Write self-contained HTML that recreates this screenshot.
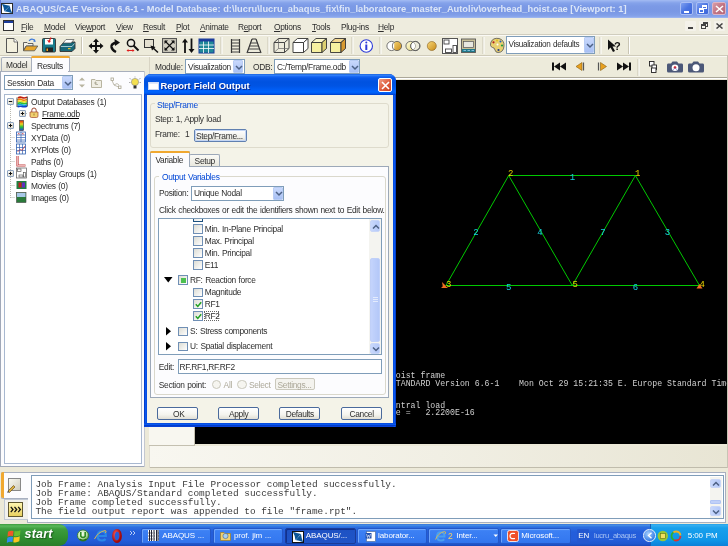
<!DOCTYPE html>
<html><head><meta charset="utf-8">
<style>
*{margin:0;padding:0;box-sizing:border-box}
html,body{width:728px;height:546px;overflow:hidden;will-change:transform;background:#ECE9D8;font-family:"Liberation Sans",sans-serif;font-size:8px;color:#000;position:relative}
.a{position:absolute}
.t{position:absolute;white-space:nowrap;line-height:1;font-size:8.4px;letter-spacing:-0.3px;word-spacing:0.6px;color:#2E2E2E}
u{text-decoration:underline;text-underline-offset:1px}
</style></head><body>
<!-- title bar -->
<div class="a" style="left:0;top:0;width:728px;height:18px;border-left:1px solid #6A7ED8;background:linear-gradient(#A4BCF2 0px,#98B2F0 1px,#84A2EA 3px,#7C9AE6 6px,#7997E4 11px,#809EE8 15px,#8CA8EC 17px,#A8BEF2 18px)"></div>
<svg class="a" style="left:1px;top:3px" width="12" height="11" viewBox="0 0 12 11"><rect x="0.5" y="0.5" width="11" height="10" fill="#fff" stroke="#2A2A2A"/><path d="M0.8 0.8 Q5 2.2 8.8 2.8 Q9 6 11.2 10.2 Q7 8.6 3.4 8.2 Q3.2 4.5 0.8 0.8Z" fill="#0A5598"/><path d="M3.8 8 L8.8 3" stroke="#D8E8F8" stroke-width="0.7" stroke-dasharray="1 0.8"/></svg>
<div class="t" style="left:16px;top:5px;font-size:9.3px;font-weight:bold;color:#DCE6F8;letter-spacing:0px;word-spacing:0">ABAQUS/CAE Version 6.6-1 - Model Database: d:\lucru\lucru_abaqus_fix\fin_laboratoare_master_Autoliv\overhead_hoist.cae [Viewport: 1]</div>
<div class="a" style="left:680px;top:2px;width:13px;height:13px;border-radius:2px;background:linear-gradient(135deg,#7FA0F0,#4A74E2 50%,#3E66D8);border:1px solid #A9BEF5"><div class="a" style="left:3px;top:8px;width:5px;height:2px;background:#fff"></div></div>
<div class="a" style="left:696px;top:2px;width:13px;height:13px;border-radius:2px;background:linear-gradient(135deg,#7FA0F0,#4A74E2 50%,#3E66D8);border:1px solid #A9BEF5"><div class="a" style="left:5px;top:2px;width:5px;height:4px;border:1px solid #fff;border-top-width:2px"></div><div class="a" style="left:2px;top:5px;width:5px;height:5px;border:1px solid #fff;border-top-width:2px;background:#4A74E2"></div></div>
<div class="a" style="left:712px;top:2px;width:14px;height:13px;border-radius:2px;background:linear-gradient(135deg,#D89CA8,#C27584 50%,#B5687A);border:1px solid #DDB4C4"><svg class="a" style="left:2px;top:2px" width="9" height="8"><path d="M1 1L8 7M8 1L1 7" stroke="#fff" stroke-width="1.6"/></svg></div>
<!-- menubar -->
<div class="a" style="left:0;top:18px;width:728px;height:16px;background:#EEECDE"></div>
<svg class="a" style="left:3px;top:20px" width="11" height="11"><rect x="0.5" y="0.5" width="10" height="10" fill="#fff" stroke="#333"/><rect x="1" y="1" width="9" height="2" fill="#1C3C9C"/></svg>
<div class="t" style="left:21px;top:23px"><u>F</u>ile</div>
<div class="t" style="left:44px;top:23px"><u>M</u>odel</div>
<div class="t" style="left:75px;top:23px">Vie<u>w</u>port</div>
<div class="t" style="left:116px;top:23px"><u>V</u>iew</div>
<div class="t" style="left:143px;top:23px"><u>R</u>esult</div>
<div class="t" style="left:176px;top:23px"><u>P</u>lot</div>
<div class="t" style="left:200px;top:23px"><u>A</u>nimate</div>
<div class="t" style="left:238px;top:23px">R<u>e</u>port</div>
<div class="t" style="left:274px;top:23px"><u>O</u>ptions</div>
<div class="t" style="left:312px;top:23px"><u>T</u>ools</div>
<div class="t" style="left:341px;top:23px">Plug-ins</div>
<div class="t" style="left:378px;top:23px"><u>H</u>elp</div>
<!-- mdi buttons -->
<div class="a" style="left:685px;top:21px;width:11px;height:10px;background:#F4F2EA;border-radius:1px"><div class="a" style="left:3px;top:6px;width:5px;height:2px;background:#444"></div></div>
<div class="a" style="left:699px;top:21px;width:12px;height:10px;background:#F4F2EA;border-radius:1px"><div class="a" style="left:4px;top:1px;width:5px;height:5px;border:1px solid #444;border-top-width:2px"></div><div class="a" style="left:2px;top:3px;width:5px;height:5px;border:1px solid #444;border-top-width:2px;background:#F4F2EA"></div></div>
<div class="a" style="left:714px;top:21px;width:11px;height:10px;background:#F4F2EA;border-radius:1px"><svg class="a" style="left:2px;top:2px" width="7" height="6"><path d="M0.5 0.5L6.5 5.5M6.5 0.5L0.5 5.5" stroke="#444" stroke-width="1.5"/></svg></div>
<!-- toolbar -->
<div class="a" style="left:0;top:34px;width:728px;height:1px;background:#D0CDBE"></div>
<div class="a" style="left:0;top:35px;width:728px;height:1px;background:#FBFAF5"></div>
<div class="a" style="left:0;top:36px;width:728px;height:19px;background:#EDEBDB"></div>
<div class="a" style="left:0;top:55px;width:728px;height:1px;background:#CFCBBA"></div>
<div class="a" style="left:0;top:56px;width:728px;height:1px;background:#FBFAF5"></div>
<div class="a" style="left:0;top:57px;width:728px;height:22px;background:#EDEBDB"></div>
<!-- toolbar icons -->
<svg class="a" style="left:0;top:34px" width="728" height="22" viewBox="0 34 728 22">
<defs>
<linearGradient id="gy" x1="0" y1="0" x2="1" y2="1"><stop offset="0" stop-color="#FFFDE0"/><stop offset="1" stop-color="#E8D878"/></linearGradient>
<linearGradient id="go" x1="0" y1="0" x2="1" y2="1"><stop offset="0" stop-color="#F8D878"/><stop offset="1" stop-color="#C88A18"/></linearGradient>
</defs>
<!-- new -->
<path d="M6.5 38.5 H14 L17.5 42 V52.5 H6.5 Z" fill="#F3F0DE" stroke="#555" stroke-width="1"/>
<path d="M14 38.5 V42 H17.5" fill="#fff" stroke="#555" stroke-width="0.8"/>
<!-- open -->
<path d="M23.5 42.5 H27 L28 43.5 H33 V46 H26 L23.5 50.5 Z" fill="#F4F2E8" stroke="#555" stroke-width="0.9"/>
<path d="M23.5 50.8 L26.3 46 H37.8 L34.5 50.8 Z" fill="#E8A62A" stroke="#555" stroke-width="0.8"/>
<path d="M29 41 Q31.5 37.5 35 40.5" fill="none" stroke="#3C78D8" stroke-width="1.1"/>
<path d="M34 39 L36 41.5 L33.5 42" fill="#3C78D8"/>
<!-- save -->
<rect x="42.5" y="38.5" width="13" height="13.5" rx="1" fill="#187A8A" stroke="#333" stroke-width="0.9"/>
<rect x="45" y="39" width="8" height="5.5" fill="#fff"/>
<rect x="45.5" y="47.5" width="7.5" height="4.5" fill="#222"/>
<rect x="46.5" y="48.5" width="1.5" height="2.5" fill="#E8A020"/>
<path d="M51 37.5 L49 41.5" stroke="#E02020" stroke-width="1.2"/><path d="M47 40 L49 43 L51 41" fill="#E02020"/>
<!-- print -->
<path d="M60 46.5 L64 42 H75 V48.5 L72 51.5 H60 Z" fill="#186878" stroke="#333" stroke-width="0.9"/>
<path d="M63 43 L66 39.5 H74 L71 43 Z" fill="#fff" stroke="#555" stroke-width="0.7"/>
<path d="M61 46.5 H72 L74.5 43.5" fill="none" stroke="#C8E0E8" stroke-width="0.8"/>
<rect x="68" y="48" width="2.5" height="1.2" fill="#E8C030"/>
<!-- sep -->
<rect x="81" y="37" width="1" height="17" fill="#C9C5B4"/><rect x="82" y="37" width="1" height="17" fill="#FFFFFF"/>
<!-- move -->
<path d="M96 38.5 L99 42 H97 V45 H100 V43 L103.5 46 L100 49 V47 H97 V50 H99 L96 53.5 L93 50 H95 V47 H92 V49 L88.5 46 L92 43 V45 H95 V42 H93 Z" fill="#111"/>
<!-- rotate -->
<path d="M117 42.5 Q111 43.5 111.5 47 Q112 50 116 52" fill="none" stroke="#111" stroke-width="2.4"/>
<path d="M114.5 39 L120 42.5 L115 46 Z" fill="#111"/>
<!-- zoom -->
<circle cx="131" cy="43" r="3.6" fill="#F0EEE4" stroke="#111" stroke-width="1.5"/>
<path d="M133.5 45.5 L138.5 50.5" stroke="#111" stroke-width="2"/>
<path d="M127 50.5 H134" stroke="#E02020" stroke-width="1"/><path d="M126.5 50.5 L128.5 49 V52Z M134.5 50.5 L132.5 49 V52Z" fill="#E02020"/>
<!-- box zoom -->
<rect x="144.5" y="39.5" width="9" height="8" fill="#E4E0D0" stroke="#333" stroke-width="1"/>
<path d="M151.5 46.5 L158 52.5" stroke="#111" stroke-width="1.5"/><path d="M150.5 45.5 L155.5 47 L152 50.5 Z" fill="#111"/>
<!-- auto-fit pressed -->
<rect x="162.5" y="38.5" width="14" height="14" fill="#B6B3A6" stroke="#555" stroke-width="1"/>
<rect x="163.5" y="39.5" width="12" height="12" fill="#D4D1C4"/>
<path d="M165 41 L174 50 M174 41 L165 50" stroke="#111" stroke-width="1.2"/>
<path d="M164.5 40.5 H168 L164.5 44Z M174.5 40.5 H171 L174.5 44Z M164.5 50.5 H168 L164.5 47Z M174.5 50.5 H171 L174.5 47Z" fill="#111"/>
<!-- up/down -->
<path d="M185 41 V53" stroke="#111" stroke-width="1.8"/><path d="M182 42.5 L185 38.5 L188 42.5Z" fill="#111"/>
<path d="M191.5 38.5 V50" stroke="#111" stroke-width="1.8"/><path d="M188.5 49 L191.5 53 L194.5 49Z" fill="#111"/>
<!-- table -->
<rect x="199" y="39" width="15" height="14" fill="#208898" stroke="#1C3C9C" stroke-width="1"/>
<rect x="199" y="39" width="15" height="2.5" fill="#1C3C9C"/>
<path d="M199 45 H214 M199 48.5 H214 M203.5 41.5 V53 M208.5 41.5 V53" stroke="#fff" stroke-width="0.8"/>
<!-- sep -->
<rect x="220.5" y="37" width="1" height="17" fill="#C9C5B4"/><rect x="221.5" y="37" width="1" height="17" fill="#FFFFFF"/>
<!-- ladder -->
<path d="M231.5 39 V53 M239.5 39 V53" stroke="#333" stroke-width="1.2"/>
<path d="M231.5 40 H239.5 M231.5 43 H239.5 M231.5 46 H239.5 M231.5 49 H239.5 M231.5 52 H239.5" stroke="#444" stroke-width="1"/>
<!-- pyramid -->
<path d="M252 39 L247 53 M256 39 L261 53 M252 39 H256" stroke="#333" stroke-width="1.2" fill="none"/>
<path d="M250.5 43 H257.5 M249.5 46 H258.5 M248.5 49 H259.5 M247.5 52.5 H260.5" stroke="#444" stroke-width="1"/>
<!-- sep -->
<rect x="267.5" y="37" width="1" height="17" fill="#C9C5B4"/><rect x="268.5" y="37" width="1" height="17" fill="#FFFFFF"/>
<!-- wire cube -->
<g fill="none" stroke="#333" stroke-width="0.9"><path d="M274 42.5 H284.5 V52.5 H274 Z M274 42.5 L278.5 38.5 H289 L284.5 42.5 M289 38.5 V48.5 L284.5 52.5"/><path d="M278.5 38.5 V48.5 H289 M278.5 48.5 L274 52.5" stroke="#666" stroke-width="0.7"/></g>
<!-- hidden cube -->
<g fill="#fff" stroke="#333" stroke-width="0.9"><path d="M293 42.5 H303.5 V52.5 H293 Z"/><path d="M293 42.5 L297.5 38.5 H308 L303.5 42.5 Z"/><path d="M303.5 42.5 L308 38.5 V48.5 L303.5 52.5 Z"/></g>
<!-- filled cube -->
<g stroke="#333" stroke-width="0.9"><path d="M311.5 42.5 H322 V52.5 H311.5 Z" fill="#F6F0A0"/><path d="M311.5 42.5 L316 38.5 H326.5 L322 42.5 Z" fill="#FAF6C8"/><path d="M322 42.5 L326.5 38.5 V48.5 L322 52.5 Z" fill="#DCD070"/></g>
<!-- shaded cube -->
<g stroke="#333" stroke-width="0.9"><path d="M330.5 42.5 H341 V52.5 H330.5 Z" fill="#F6F0A0"/><path d="M330.5 42.5 L335 38.5 H345.5 L341 42.5 Z" fill="#F4D890"/><path d="M341 42.5 L345.5 38.5 V48.5 L341 52.5 Z" fill="#D89A30"/></g>
<!-- sep -->
<rect x="351.5" y="37" width="1" height="17" fill="#C9C5B4"/><rect x="352.5" y="37" width="1" height="17" fill="#FFFFFF"/>
<!-- info -->
<circle cx="366.3" cy="46" r="6.2" fill="#fff" stroke="#2E3CD8" stroke-width="1.1"/>
<circle cx="366.3" cy="42.5" r="1" fill="#2E3CD8"/><rect x="365.3" y="44.5" width="2" height="5.5" fill="#2E3CD8"/>
<!-- sep -->
<rect x="379.5" y="37" width="1" height="17" fill="#C9C5B4"/><rect x="380.5" y="37" width="1" height="17" fill="#FFFFFF"/>
<!-- venn1 -->
<circle cx="391.5" cy="46" r="4.6" fill="#fff" stroke="#555" stroke-width="0.8"/>
<circle cx="397" cy="46" r="4.6" fill="url(#go)" stroke="#555" stroke-width="0.8"/>
<path d="M394.2 42.3 A4.6 4.6 0 0 0 394.2 49.7" fill="#fff" stroke="#555" stroke-width="0.6"/>
<!-- venn2 -->
<circle cx="410.5" cy="46" r="4.6" fill="url(#gy)" stroke="#555" stroke-width="0.8"/>
<circle cx="415.3" cy="46" r="4.6" fill="none" stroke="#555" stroke-width="0.8"/>
<path d="M413 42.1 A4.6 4.6 0 0 1 413 49.9 A4.6 4.6 0 0 1 413 42.1" fill="#fff"/>
<circle cx="415.3" cy="46" r="4.6" fill="none" stroke="#555" stroke-width="0.8"/>
<!-- circle -->
<circle cx="431.8" cy="46" r="4.5" fill="url(#go)" stroke="#886020" stroke-width="0.6"/>
<!-- layout -->
<rect x="442.5" y="38.5" width="15" height="15" fill="#fff" stroke="#555" stroke-width="1"/>
<rect x="444" y="40" width="5" height="4" fill="#fff" stroke="#444" stroke-width="0.9"/>
<rect x="445.5" y="49" width="6" height="3.5" fill="#fff" stroke="#444" stroke-width="0.9"/>
<rect x="453" y="45.5" width="3.5" height="7" fill="#fff" stroke="#444" stroke-width="0.9"/>
<!-- monitor -->
<rect x="461.5" y="39" width="14" height="13.5" fill="#C8C098" stroke="#555" stroke-width="0.9"/>
<rect x="463.5" y="41.5" width="10" height="6" fill="#E8E8E0" stroke="#555" stroke-width="0.7"/>
<rect x="462" y="49" width="13" height="3" fill="#207888"/>
<path d="M463.5 50.5 H466 M467.5 50.5 H470 M471.5 50.5 H474" stroke="#9CE" stroke-width="0.8"/>
<!-- sep -->
<rect x="482.5" y="37" width="1" height="17" fill="#C9C5B4"/><rect x="483.5" y="37" width="1" height="17" fill="#FFFFFF"/>
<!-- palette -->
<path d="M491 42 Q493 37.5 499 38.5 Q504.5 40 504 46 Q503.5 52.5 498 52.5 Q495.5 52.5 495 50 Q494.5 47.5 492.5 47.5 Q489.5 46.5 491 42 Z" fill="#E8D070" stroke="#555" stroke-width="0.8"/>
<circle cx="493.5" cy="42.3" r="1.1" fill="#B02020"/><circle cx="497" cy="40.6" r="1" fill="#E0C020"/><circle cx="500.5" cy="41.5" r="1" fill="#2060C0"/><circle cx="502" cy="45.5" r="1.1" fill="#20A040"/><circle cx="498.5" cy="50" r="1.1" fill="#203890"/><circle cx="497.5" cy="44.5" r="1" fill="#fff"/>
<!-- sep -->
<rect x="599.5" y="37" width="1" height="17" fill="#C9C5B4"/><rect x="600.5" y="37" width="1" height="17" fill="#FFFFFF"/>
<!-- arrow ? -->
<path d="M608 39.5 L608 50 L610.5 47.5 L613 52 L615 51 L612.5 46.5 L616 46.5 Z" fill="#111"/>
<text x="614" y="50" font-family="Liberation Sans" font-weight="bold" font-size="11" fill="#111">?</text>
<rect x="628" y="37" width="1" height="17" fill="#C9C5B4"/><rect x="629" y="37" width="1" height="17" fill="#FFFFFF"/>
</svg>
<!-- viz defaults combo -->
<div class="a" style="left:506px;top:36px;width:89px;height:18px;background:#fff;border:1px solid #7F9DB9"></div>
<div class="t" style="left:508.5px;top:41px;font-size:8.2px;letter-spacing:-0.3px">Visualization defaults</div>
<div class="a" style="left:584px;top:37px;width:10px;height:16px;border-radius:1px;background:linear-gradient(#C8D8FC,#A8C0F4);border:1px solid #B8CCF4"><svg class="a" style="left:1px;top:5px" width="8" height="6"><path d="M1 1 L4 4 L7 1" fill="none" stroke="#4D6185" stroke-width="1.5"/></svg></div>
<!-- tabs -->
<div class="a" style="left:1px;top:57px;width:31px;height:15px;background:linear-gradient(#F6F5EF,#E6E3D6);border:1px solid #A8AFBC;border-bottom:none;border-radius:2px 2px 0 0"></div>
<div class="t" style="left:6px;top:61px">Model</div>
<div class="a" style="left:31px;top:56px;width:39px;height:16px;background:#FCFCFE;border:1px solid #A8AFBC;border-bottom:none;border-radius:2px 2px 0 0"></div>
<div class="a" style="left:31px;top:56px;width:39px;height:2px;background:#F0A830;border-radius:2px 2px 0 0"></div>
<div class="t" style="left:37px;top:61.6px">Results</div>
<!-- left panel -->
<div class="a" style="left:0;top:71px;width:145px;height:396px;background:#FCFCFE;border:1px solid #A0A8B8;border-top-color:#A8AFBC"></div>
<div class="a" style="left:32px;top:71px;width:36px;height:1px;background:#FCFCFE"></div>
<div class="a" style="left:144px;top:71px;width:1px;height:396px;background:#C4C8D0"></div>
<!-- session combo -->
<div class="a" style="left:4px;top:75px;width:69px;height:15px;background:#fff;border:1px solid #7F9DB9"></div>
<div class="t" style="left:7px;top:79px">Session Data</div>
<div class="a" style="left:62px;top:76px;width:10px;height:13px;border-radius:1px;background:linear-gradient(#C8D8FC,#A8C0F4);border:1px solid #B8CCF4"><svg class="a" style="left:1px;top:3.5px" width="8" height="6"><path d="M1 1 L4 4 L7 1" fill="none" stroke="#4D6185" stroke-width="1.5"/></svg></div>
<svg class="a" style="left:76px;top:75px" width="68" height="16">
<path d="M3 5.5 L6 2.5 L9 5.5Z M3 9.5 L6 12.5 L9 9.5Z" fill="#B8B4A0"/>
<path d="M15.5 4.5 H19 L20 5.5 H25.5 V12.5 H15.5 Z" fill="#F0EEE4" stroke="#B8B4A0" stroke-width="1"/>
<path d="M18 8 H21 M19.5 6.5 V9.5 H22" stroke="#A8A490" stroke-width="0.8" fill="none"/>
<rect x="35" y="3" width="2.5" height="2.5" fill="none" stroke="#A8A490" stroke-width="0.8"/><rect x="42.5" y="11" width="2.5" height="2.5" fill="none" stroke="#A8A490" stroke-width="0.8"/>
<path d="M36 5.5 L38 10 L42.5 12 M38 10 L41 8.5 L43 10" fill="none" stroke="#A8A490" stroke-width="0.7"/>
<circle cx="59" cy="7" r="3.6" fill="#F4E050" stroke="#888" stroke-width="0.6"/>
<rect x="57.5" y="10.5" width="3" height="3" fill="#333"/>
<path d="M53.5 3 L55 4.5 M64.5 3 L63 4.5 M53 7.5 H54.5 M65 7.5 H63.5 M59 1.5 V2.5" stroke="#777" stroke-width="0.6"/>
</svg>
<!-- tree box -->
<div class="a" style="left:4px;top:94px;width:138px;height:370px;background:#fff;border:1px solid #A8B8D0"></div>
<svg class="a" style="left:5px;top:95px" width="137" height="110">
<g stroke="#B8B8B0" stroke-width="1" stroke-dasharray="1 1">
<path d="M5.5 10 V103.5 M5.5 42.5 H10 M5.5 54.5 H10 M5.5 66.5 H10 M5.5 90.5 H10 M5.5 102.5 H10 M17 17 V18 M17 18.5 H22"/>
</g>
<!-- expanders -->
<defs><linearGradient id="exg" x1="0" y1="0" x2="1" y2="1"><stop offset="0" stop-color="#fff"/><stop offset="1" stop-color="#DCD8C8"/></linearGradient></defs>
<g fill="url(#exg)" stroke="#90A4C0" stroke-width="1"><rect x="2.5" y="3.5" width="6" height="6" rx="0.5"/><rect x="14.5" y="15.5" width="6" height="6" rx="0.5"/><rect x="2.5" y="27.5" width="6" height="6" rx="0.5"/><rect x="2.5" y="75.5" width="6" height="6" rx="0.5"/></g>
<g stroke="#111" stroke-width="1"><path d="M3.8 6.5 H7.2 M15.8 18.5 H19.2 M17.5 16.8 V20.2 M3.8 30.5 H7.2 M5.5 28.8 V32.2 M3.8 78.5 H7.2 M5.5 76.8 V80.2"/></g>
<!-- odb icon -->
<g stroke-width="1.6" fill="none">
<path d="M13 3 Q15 1.5 17 2.5 Q19 3.5 22 2.3" stroke="#C02010"/>
<path d="M12.5 5 Q15 3.5 17 4.7 Q19 5.8 22 4.5" stroke="#F08010"/>
<path d="M12.5 6.8 Q15 5.5 17 6.5 Q19 7.5 22 6.3" stroke="#E8E020"/>
<path d="M12.5 8.5 Q15 7.3 17 8.3 Q19 9.3 22 8.1" stroke="#30C030"/>
<path d="M12.5 10.3 Q15 9 17 10 Q19 11 22 9.8" stroke="#10A8D8"/>
<path d="M12.5 11.8 Q15 10.8 17 11.5 Q19 12.2 22 11.3" stroke="#1040D0"/>
</g>
<path d="M12 2.5 V12" stroke="#222" stroke-width="0.8"/><path d="M22.3 1.5 V11.5" stroke="#222" stroke-width="0.8"/>
<!-- lock -->
<path d="M26.8 17 V15.3 Q26.8 13 29 13 Q31.2 13 31.2 15.3 V17" fill="none" stroke="#A04830" stroke-width="1"/>
<path d="M25 17 H33 V21 Q33 22.5 31.5 22.5 H26.5 Q25 22.5 25 21Z" fill="#F0D070" stroke="#A04830" stroke-width="0.7"/><rect x="28.5" y="18.5" width="1" height="2" fill="#A08030"/>
<!-- spectrum -->
<defs><linearGradient id="spc" x1="0" y1="0" x2="0" y2="1"><stop offset="0" stop-color="#E02010"/><stop offset=".35" stop-color="#F0D020"/><stop offset=".65" stop-color="#20C040"/><stop offset="1" stop-color="#2040E0"/></linearGradient></defs>
<rect x="14.5" y="25.5" width="4" height="10" fill="url(#spc)" stroke="#333" stroke-width="0.6"/>
<!-- xydata -->
<rect x="11.5" y="37" width="9" height="10" fill="#fff" stroke="#3060B0" stroke-width="0.8"/><path d="M11.5 40 H20.5 M11.5 42.5 H20.5 M11.5 45 H20.5 M16 37 V47" stroke="#3060B0" stroke-width="0.7"/><path d="M13 38 L14.5 39.5 M14.5 38 L13 39.5 M17 38 L18.5 39.5 M18.5 38 L17 39.5" stroke="#D03030" stroke-width="0.6"/>
<!-- xyplots -->
<rect x="11.5" y="49" width="9" height="10" fill="#fff" stroke="#3060B0" stroke-width="0.8"/><path d="M11.5 52.5 H20.5 M11.5 55.5 H20.5 M14.5 49 V59 M17.5 49 V59" stroke="#3060B0" stroke-width="0.7"/><path d="M12.5 57 L15.5 54 L17 55.5 L20 51" stroke="#D03030" stroke-width="0.7" fill="none"/>
<!-- paths -->
<path d="M12.5 61 V70.5 H20.5" fill="none" stroke="#C04040" stroke-width="2.2"/><path d="M12.5 61 V70.5 H20.5" fill="none" stroke="#F8D0D0" stroke-width="0.8"/>
<!-- display groups -->
<rect x="11.5" y="73" width="10" height="10" fill="#fff" stroke="#555" stroke-width="0.7"/><rect x="12.5" y="74" width="3.5" height="2.5" fill="none" stroke="#444" stroke-width="0.6"/><rect x="14" y="80" width="4" height="2" fill="none" stroke="#444" stroke-width="0.6"/><rect x="18.5" y="77.5" width="2" height="4.5" fill="none" stroke="#444" stroke-width="0.6"/>
<!-- movies -->
<rect x="11.5" y="86" width="10" height="8" fill="#208040"/><rect x="13.5" y="87.5" width="3" height="5" fill="#C02020"/><rect x="17" y="87.5" width="3" height="5" fill="#6030C0"/>
<!-- images -->
<rect x="11.5" y="97.5" width="9.5" height="10" fill="#2A7A3A" stroke="#444" stroke-width="0.6"/><rect x="12" y="98" width="8.5" height="4" fill="#A8C8E8"/>
</svg>
<div class="t" style="left:31px;top:98px">Output Databases (1)</div>
<div class="t" style="left:42px;top:110px">Frame.odb</div>
<div class="a" style="left:42px;top:118px;width:37px;height:1px;background:#000"></div>
<div class="t" style="left:31px;top:122px">Spectrums (7)</div>
<div class="t" style="left:31px;top:134px">XYData (0)</div>
<div class="t" style="left:31px;top:146px">XYPlots (0)</div>
<div class="t" style="left:31px;top:158px">Paths (0)</div>
<div class="t" style="left:31px;top:170px">Display Groups (1)</div>
<div class="t" style="left:31px;top:182px">Movies (0)</div>
<div class="t" style="left:31px;top:194px">Images (0)</div>
<!-- module row -->
<div class="a" style="left:149px;top:57px;width:1px;height:20px;background:#D8D4C4"></div>
<div class="t" style="left:155px;top:63px">Module:</div>
<div class="a" style="left:185px;top:59px;width:60px;height:15px;background:#fff;border:1px solid #7F9DB9"></div>
<div class="t" style="left:188px;top:63px">Visualization</div>
<div class="a" style="left:233px;top:60px;width:10px;height:13px;border-radius:1px;background:linear-gradient(#C8D8FC,#A8C0F4);border:1px solid #B8CCF4"><svg class="a" style="left:1px;top:3.5px" width="8" height="6"><path d="M1 1 L4 4 L7 1" fill="none" stroke="#4D6185" stroke-width="1.5"/></svg></div>
<div class="t" style="left:253px;top:63px">ODB:</div>
<div class="a" style="left:274px;top:59px;width:86px;height:15px;background:#fff;border:1px solid #7F9DB9"></div>
<div class="t" style="left:277px;top:63px">C:/Temp/Frame.odb</div>
<div class="a" style="left:349px;top:60px;width:10px;height:13px;border-radius:1px;background:linear-gradient(#C8D8FC,#A8C0F4);border:1px solid #B8CCF4"><svg class="a" style="left:1px;top:3.5px" width="8" height="6"><path d="M1 1 L4 4 L7 1" fill="none" stroke="#4D6185" stroke-width="1.5"/></svg></div>
<!-- anim controls -->
<svg class="a" style="left:540px;top:57px" width="188" height="21">
<path d="M13 5.5 V13.5" stroke="#111" stroke-width="2"/><path d="M20 5.5 L14 9.5 L20 13.5Z M26 5.5 L20 9.5 L26 13.5Z" fill="#111"/>
<path d="M43.5 5.5 V13.5" stroke="#555" stroke-width="1.2"/><path d="M42 5.5 L36 9.5 L42 13.5Z" fill="#E8A020" stroke="#886010" stroke-width="0.6"/>
<path d="M58.5 5.5 V13.5" stroke="#555" stroke-width="1.2"/><path d="M60.5 5.5 L66.5 9.5 L60.5 13.5Z" fill="#E8A020" stroke="#886010" stroke-width="0.6"/>
<path d="M77 5.5 L83 9.5 L77 13.5Z M83 5.5 L89 9.5 L83 13.5Z" fill="#111"/><path d="M90 5.5 V13.5" stroke="#111" stroke-width="2"/>
<rect x="97.5" y="2" width="1" height="17" fill="#C9C5B4"/><rect x="98.5" y="2" width="1" height="17" fill="#FFFFFF"/>
<rect x="109.5" y="4.5" width="4.5" height="4.5" fill="#fff" stroke="#222" stroke-width="0.9"/><rect x="112" y="8" width="4.5" height="4.5" fill="#fff" stroke="#222" stroke-width="0.9"/><rect x="111.5" y="11" width="4.5" height="4.5" fill="#fff" stroke="#222" stroke-width="0.9"/>
<path d="M128 6.5 H131 L132.5 4.5 H137 L138.5 6.5 H142 Q143 6.5 143 8 V14 Q143 15.5 141.5 15.5 H128.5 Q127 15.5 127 14 V8 Q127 6.5 128 6.5Z" fill="#4C5878"/>
<circle cx="135" cy="10.8" r="3.3" fill="#fff"/><circle cx="135" cy="10.5" r="1.3" fill="#E01010"/><path d="M133 13 L135 10.5 L137 13" stroke="#6080E0" stroke-width="0.6" fill="none"/>
<path d="M149 6.5 H152 L153.5 4.5 H158 L159.5 6.5 H163 Q164 6.5 164 8 V14 Q164 15.5 162.5 15.5 H149.5 Q148 15.5 148 14 V8 Q148 6.5 149 6.5Z" fill="#4C5878"/>
<circle cx="156" cy="10.8" r="3.5" fill="#fff"/>
</svg>
<!-- viewport frame -->
<div class="a" style="left:149px;top:77px;width:579px;height:1px;background:#ACA899"></div>
<div class="a" style="left:149px;top:78px;width:579px;height:1px;background:#FFFFFF"></div>
<div class="a" style="left:727px;top:55px;width:1px;height:414px;background:#C8C4B4"></div>
<div class="a" style="left:149px;top:79px;width:46px;height:367px;background:#F8F7F0;border-right:1px solid #C4C0B0;border-bottom:1px solid #C4C0B0"></div>
<div class="a" style="left:195px;top:80px;width:532px;height:364px;background:#000"></div>
<div class="a" style="left:149px;top:446px;width:578px;height:22px;background:linear-gradient(90deg,#F8F7F0,#F1EFE4 50%,#E8E5D4);border-bottom:1px solid #C0BCAC"></div>
<div class="a" style="left:149px;top:446px;width:1px;height:22px;background:#E0DCD0"></div>
<svg class="a" style="left:195px;top:79px" width="532" height="366" viewBox="195 79 532 366">
<g stroke="#00C800" stroke-width="1" fill="none">
<path d="M508.7 175.5 H635.4 M508.7 175.5 L445.9 285.5 M508.7 175.5 L572.3 285.5 M635.4 175.5 L572.3 285.5 M635.4 175.5 L699.5 285.5 M445.9 285.5 H699.5"/>
</g>
<g font-family="Liberation Mono" font-size="9" fill="#18D0E0" text-anchor="middle">
<text x="572.5" y="180">1</text><text x="476" y="234.5">2</text><text x="540" y="234.5">4</text><text x="603" y="234.5">7</text><text x="667.5" y="234.5">3</text><text x="508.7" y="289.5">5</text><text x="635.4" y="289.5">6</text>
</g>
<g font-family="Liberation Mono" font-size="9" fill="#E6D200">
<text x="508" y="176">2</text><text x="635" y="176">1</text><text x="446" y="287">3</text><text x="572.5" y="287">5</text><text x="699.5" y="287">4</text>
</g>
<path d="M442 282 L446 286 L443 288 Z M444 285 L448 288 H441Z" fill="#F07020"/>
<path d="M699.5 284 L702.5 288.5 H696.5Z" fill="#F07020"/>
<g font-family="Liberation Mono" font-size="8.23" fill="#D0D0D0" style="white-space:pre">
<text x="395.8" y="377.5" xml:space="preserve">oist frame</text>
<text x="395.8" y="385.5" xml:space="preserve">TANDARD Version 6.6-1    Mon Oct 29 15:21:35 E. Europe Standard Time</text>
<text x="395.8" y="408" xml:space="preserve">ntral load</text>
<text x="395.8" y="414.6" xml:space="preserve">e =   2.2200E-16</text>
</g>
</svg>
<!-- message area -->
<div class="a" style="left:0;top:468px;width:728px;height:56px;background:#ECE9D8"></div>
<div class="a" style="left:27px;top:471.5px;width:699px;height:51px;background:#FCFCFE;border:1px solid #A8B0C0"></div>
<div class="a" style="left:1px;top:471.5px;width:27px;height:27px;background:#FCFCFE;border:1px solid #A8B0C0;border-right:none;border-radius:2px 0 0 2px"></div>
<div class="a" style="left:1px;top:472px;width:2.5px;height:26px;background:#F0A830;border-radius:2px 0 0 2px"></div>
<div class="a" style="left:3.5px;top:498.5px;width:24.5px;height:21.5px;background:#F2F1EC;border:1px solid #C0C8D4;border-right:none"></div>
<div class="a" style="left:8.2px;top:477.6px;width:13.2px;height:13.8px;border:1px solid #888;background:linear-gradient(135deg,#F8F8F0,#D0CEC0)"></div>
<svg class="a" style="left:6px;top:483px" width="10" height="10"><path d="M2 8 L7.5 2.5 L9 4 L3.5 9.5 Z" fill="#D8B040" stroke="#604010" stroke-width="0.6"/><path d="M1 9.5 L2 8 L3.5 9.5Z" fill="#333"/></svg>
<div class="a" style="left:8.2px;top:502.4px;width:14.8px;height:14.2px;border:1px solid #605830;background:linear-gradient(#FFF6B0,#E8D060)"></div>
<svg class="a" style="left:10px;top:506px" width="12" height="7"><path d="M0.8 0.8 L3 3.5 L0.8 6.2 M4.5 0.8 L6.7 3.5 L4.5 6.2 M8.2 0.8 L10.4 3.5 L8.2 6.2" fill="none" stroke="#111" stroke-width="1.3"/></svg>
<div class="a" style="left:31px;top:475.4px;width:693px;height:43.4px;background:#fff;border:1px solid #7F9DB9"></div>
<div class="t" style="left:35.4px;top:479.50px;font-family:'Liberation Mono',monospace;font-size:9.42px;letter-spacing:0;word-spacing:0;white-space:pre;color:#3A3A3A">Job Frame: Analysis Input File Processor completed successfully.</div>
<div class="t" style="left:35.4px;top:488.83px;font-family:'Liberation Mono',monospace;font-size:9.42px;letter-spacing:0;word-spacing:0;white-space:pre;color:#3A3A3A">Job Frame: ABAQUS/Standard completed successfully.</div>
<div class="t" style="left:35.4px;top:498.16px;font-family:'Liberation Mono',monospace;font-size:9.42px;letter-spacing:0;word-spacing:0;white-space:pre;color:#3A3A3A">Job Frame completed successfully.</div>
<div class="t" style="left:35.4px;top:507.49px;font-family:'Liberation Mono',monospace;font-size:9.42px;letter-spacing:0;word-spacing:0;white-space:pre;color:#3A3A3A">The field output report was appended to file &quot;frame.rpt&quot;.</div>

<div class="a" style="left:709.5px;top:476.5px;width:12px;height:41px;background:#F4F4F0"></div>
<div class="a" style="left:710px;top:478.7px;width:10.5px;height:9px;border-radius:2px;background:linear-gradient(90deg,#C8D8FC,#B4C8F8);border:1px solid #C8D6F8"><svg class="a" style="left:1px;top:1.5px" width="8" height="6"><path d="M1 4.5 L4 1.5 L7 4.5" fill="none" stroke="#4D6185" stroke-width="1.5"/></svg></div>
<div class="a" style="left:710px;top:499.8px;width:10.5px;height:4.2px;border-radius:1px;background:#C0D0F8;border:1px solid #B0C4F4"></div>
<div class="a" style="left:710px;top:506.2px;width:10.5px;height:10px;border-radius:2px;background:linear-gradient(90deg,#C8D8FC,#B4C8F8);border:1px solid #C8D6F8"><svg class="a" style="left:1px;top:2px" width="8" height="6"><path d="M1 1.5 L4 4.5 L7 1.5" fill="none" stroke="#4D6185" stroke-width="1.5"/></svg></div>
<!-- taskbar -->
<div class="a" style="left:0;top:524px;width:728px;height:22px;background:linear-gradient(#3168D5 0,#4993E6 1px,#2D6FE0 3px,#245EDB 8px,#245DDA 16px,#1F56CE 20px,#1A48B8 22px)"></div>
<div class="a" style="left:0;top:524px;width:68px;height:22px;border-radius:0 9px 9px 0;background:linear-gradient(#3C9A3C 0,#5AB85A 2px,#3D9D3D 5px,#2F8F2F 14px,#2A7E2A 22px)"></div>
<svg class="a" style="left:6px;top:528px" width="17" height="15"><g transform="skewY(-8) translate(0 2)"><path d="M2 2 Q4.5 0.8 7.5 2 L7 7 Q4 5.8 1.5 7Z" fill="#F05828"/><path d="M8.5 2.2 Q11.5 3.4 14.5 2.2 L14 7.2 Q11 8.4 8 7.2Z" fill="#6AC030"/><path d="M1.3 8 Q4 6.8 7 8 L6.5 13 Q3.5 11.8 0.8 13Z" fill="#2E8CF0"/><path d="M7.8 8.2 Q10.8 9.4 13.8 8.2 L13.3 13.2 Q10.3 14.4 7.3 13.2Z" fill="#F8C820"/></g></svg>
<div class="t" style="left:24.5px;top:528px;font-size:12.5px;font-weight:bold;font-style:italic;letter-spacing:0.2px;color:#fff;text-shadow:1px 1px 1px #1C5A1C">start</div>
<svg class="a" style="left:76px;top:528px" width="64" height="16">
<defs><radialGradient id="ut" cx=".4" cy=".35" r=".7"><stop offset="0" stop-color="#F4FFF0"/><stop offset=".6" stop-color="#B8E0A8"/><stop offset="1" stop-color="#3C8A2C"/></radialGradient>
<radialGradient id="op" cx=".35" cy=".35" r=".7"><stop offset="0" stop-color="#FF6060"/><stop offset="1" stop-color="#A00808"/></radialGradient></defs>
<circle cx="7" cy="7.5" r="5.6" fill="url(#ut)" stroke="#2E7A22" stroke-width="0.8"/><path d="M4.8 4 V8.3 Q7 10.8 9.2 8.3 V4" fill="none" stroke="#2E8A22" stroke-width="1.6"/><path d="M3.5 11 Q7 13.5 10.5 11" stroke="#1E6A12" stroke-width="1.2" fill="none"/>
<path d="M22.3 8 H29.8 Q30 3.3 26 3.3 Q21.5 3.3 21.5 8 Q21.5 12.5 26 12.5 Q28.3 12.5 29.6 11" fill="none" stroke="#2A88E8" stroke-width="2.2"/>
<path d="M18.5 11 Q22 4 29 2.5 Q31 2.5 29.5 5" fill="none" stroke="#F0C040" stroke-width="0.9"/>
<ellipse cx="41" cy="8" rx="3.6" ry="5.6" fill="none" stroke="url(#op)" stroke-width="2.6"/>
<path d="M54 3 L56 5 L54 7 M57 3 L59 5 L57 7" fill="none" stroke="#C8D8F8" stroke-width="0.9"/>
</svg>
<div class="a" style="left:141.2px;top:527.7px;width:70.30000000000001px;height:16px;border-radius:2px;background:linear-gradient(#4C8EF8 0,#3C80F4 2px,#3478F0 12px,#2E6EE8 16px);border:1px solid #2458C8;box-shadow:inset 1px 1px 0 #6CA4FC"></div>
<svg class="a" style="left:147.7px;top:530px" width="12" height="12"><rect x="0" y="0" width="11" height="11" fill="#fff"/><path d="M1.5 0V11M3.5 0V11M6 0V11M8.5 0V11M10 0V11" stroke="#223" stroke-width="1"/><path d="M0 3H11M0 6H11M0 9H11" stroke="#223" stroke-width="0.6" stroke-dasharray="1 1"/></svg>
<div class="t" style="left:162.2px;top:531.5px;font-size:8px;letter-spacing:-0.1px;color:#fff">ABAQUS ...</div>
<div class="a" style="left:213px;top:527.7px;width:70.39999999999998px;height:16px;border-radius:2px;background:linear-gradient(#4C8EF8 0,#3C80F4 2px,#3478F0 12px,#2E6EE8 16px);border:1px solid #2458C8;box-shadow:inset 1px 1px 0 #6CA4FC"></div>
<svg class="a" style="left:219.5px;top:530px" width="12" height="12"><path d="M0.5 2.5 H4 L5 3.5 H10.5 V10.5 H0.5Z" fill="#F0D070" stroke="#A08020" stroke-width="0.7"/><circle cx="5.5" cy="6" r="2.6" fill="#A8D0F0" stroke="#406090" stroke-width="0.6"/></svg>
<div class="t" style="left:234px;top:531.5px;font-size:8px;letter-spacing:-0.1px;color:#fff">prof. jim ...</div>
<div class="a" style="left:284.8px;top:527.7px;width:71.0px;height:16px;border-radius:2px;background:linear-gradient(#1C4FC0 0,#1E52C4 2px,#1F55C8 18px,#2660D8 16px);border:1px solid #1A3C98;box-shadow:inset 1px 1px 0 #103090"></div>
<svg class="a" style="left:292px;top:530.5px" width="12" height="12" viewBox="0 0 12 12"><rect x="0.5" y="0.5" width="11" height="11" fill="#fff" stroke="#111"/><path d="M0.8 0.8 Q5 2.2 9 3 Q9.2 6.5 11.2 11.2 Q7 9.6 3.4 9 Q3.2 5 0.8 0.8Z" fill="#0A5598"/><path d="M3.8 8.8 L9 3" stroke="#D8E8F8" stroke-width="0.7" stroke-dasharray="1 0.8"/></svg>
<div class="t" style="left:305.8px;top:531.5px;font-size:8px;letter-spacing:-0.1px;color:#fff">ABAQUS/...</div>
<div class="a" style="left:357px;top:527.7px;width:69.80000000000001px;height:16px;border-radius:2px;background:linear-gradient(#4C8EF8 0,#3C80F4 2px,#3478F0 12px,#2E6EE8 16px);border:1px solid #2458C8;box-shadow:inset 1px 1px 0 #6CA4FC"></div>
<svg class="a" style="left:364.5px;top:530px" width="12" height="12"><rect x="1.5" y="1.5" width="9" height="10" fill="#fff" stroke="#5070A0" stroke-width="0.7"/><rect x="0.5" y="3" width="6" height="5.5" fill="#2050B0"/><path d="M1.5 4 L2.5 7.5 L3.5 5 L4.5 7.5 L5.5 4" fill="none" stroke="#fff" stroke-width="0.6"/></svg>
<div class="t" style="left:378px;top:531.5px;font-size:8px;letter-spacing:-0.1px;color:#fff">laborator...</div>
<div class="a" style="left:428.4px;top:527.7px;width:70.30000000000001px;height:16px;border-radius:2px;background:linear-gradient(#4C8EF8 0,#3C80F4 2px,#3478F0 12px,#2E6EE8 16px);border:1px solid #2458C8;box-shadow:inset 1px 1px 0 #6CA4FC"></div>
<svg class="a" style="left:434.9px;top:530px" width="13" height="13"><path d="M2.8 6.5 H9.5 Q9.7 2.3 6 2.3 Q2 2.3 2 6.5 Q2 10.5 6 10.5 Q8 10.5 9.2 9.2" fill="none" stroke="#4AA0F0" stroke-width="2"/><path d="M0.5 9.5 Q3 3 9.5 1.5 Q11.5 1.5 10 4" fill="none" stroke="#F0C040" stroke-width="0.8"/></svg>
<div class="t" style="left:448px;top:531.5px;font-size:8.5px;color:#F8D060">2</div>
<div class="t" style="left:456.3px;top:531.5px;font-size:8px;letter-spacing:-0.1px;color:#fff">Inter...</div>
<div class="a" style="left:500.2px;top:527.7px;width:71.00000000000006px;height:16px;border-radius:2px;background:linear-gradient(#4C8EF8 0,#3C80F4 2px,#3478F0 12px,#2E6EE8 16px);border:1px solid #2458C8;box-shadow:inset 1px 1px 0 #6CA4FC"></div>
<svg class="a" style="left:506.7px;top:530px" width="12" height="12"><rect x="0.5" y="0.5" width="11" height="11" rx="2" fill="#F05028" stroke="#fff" stroke-width="0.8"/><path d="M8 3.5 Q3 2.5 3 6 Q3 9.5 8 8.5" fill="none" stroke="#fff" stroke-width="1.2"/></svg>
<div class="t" style="left:521.2px;top:531.5px;font-size:8px;letter-spacing:-0.1px;color:#fff">Microsoft...</div>
<svg class="a" style="left:492.5px;top:533.5px" width="6" height="4"><path d="M0.5 0.5 H5 L2.75 3Z" fill="#fff"/></svg>
<div class="a" style="left:576.8px;top:529px;width:12.7px;height:14px;background:#2458D0;border-radius:1px"></div>
<div class="t" style="left:578.3px;top:531.5px;font-size:8px;letter-spacing:-0.1px;color:#fff">EN</div>
<div class="t" style="left:594px;top:532px;font-size:7.6px;color:#A8C4F4">lucru_abaqus</div>
<div class="a" style="left:649.8px;top:524px;width:78.2px;height:22px;background:linear-gradient(#1A98E8 0,#38B0F0 1px,#18A0EC 4px,#0F96E8 16px,#0C80D8 22px);border-left:1px solid #1860B8"></div>
<div class="a" style="left:643px;top:529px;width:12.5px;height:12.5px;border-radius:50%;background:radial-gradient(circle at 40% 35%,#A8D0FC,#3A80E8 70%);border:1px solid #E8F0FC"></div>
<svg class="a" style="left:646.5px;top:532px" width="6" height="7"><path d="M4.5 0.8 L1.5 3.5 L4.5 6.2" fill="none" stroke="#fff" stroke-width="1.4"/></svg>
<svg class="a" style="left:657px;top:529.5px" width="26" height="12"><circle cx="5.8" cy="6" r="5.2" fill="#98C838"/><rect x="3.3" y="3.5" width="5" height="5" fill="#F0E060" stroke="#607010" stroke-width="0.6"/>
<circle cx="19" cy="6" r="4.5" fill="none" stroke="#E03030" stroke-width="1.8" stroke-dasharray="9 20"/><circle cx="19" cy="6" r="4.5" fill="none" stroke="#30B030" stroke-width="1.8" stroke-dasharray="0 9 9 20"/><circle cx="19" cy="6" r="4.5" fill="none" stroke="#F0B020" stroke-width="1.8" stroke-dasharray="0 18 9 20"/></svg>
<div class="t" style="left:687.8px;top:531.5px;font-size:8px;letter-spacing:-0.1px;color:#fff">5:00 PM</div>
<!-- dialog -->
<div class="a" style="left:144px;top:74px;width:252px;height:352.5px;background:#0841D8;border-radius:7px 7px 0 0"></div>
<div class="a" style="left:144px;top:74px;width:252px;height:21px;border-radius:7px 7px 0 0;background:linear-gradient(#0A4ED8 0,#3C8CF8 1px,#1E6EF8 2px,#0858E8 4px,#0052E0 8px,#0054E4 12px,#005EF6 16px,#0066FF 18px,#0052E6 20px,#0038C0 21px)"></div>
<div class="a" style="left:144px;top:95px;width:3px;height:331px;background:linear-gradient(90deg,#0030B8,#0858F0 50%,#0648D8)"></div>
<div class="a" style="left:392.5px;top:95px;width:3.5px;height:331.5px;background:linear-gradient(90deg,#0648D8,#0858F0 50%,#0030B8)"></div>
<div class="a" style="left:144px;top:423.3px;width:252px;height:3.2px;background:linear-gradient(#0648D8,#0858F0 50%,#0030B8)"></div>
<svg class="a" style="left:148px;top:81.5px" width="11" height="9"><rect x="0.5" y="0.5" width="10" height="7" fill="#fff" stroke="#C8D4F0" stroke-width="1"/><rect x="0.5" y="0.5" width="10" height="1.5" fill="#E0E8FA"/></svg>
<div class="t" style="left:160.5px;top:80.6px;font-size:9.4px;font-weight:bold;color:#fff;letter-spacing:0px;word-spacing:0.5px;text-shadow:1px 1px 0 #0A2A90">Report Field Output</div>
<div class="a" style="left:377.5px;top:78px;width:14px;height:14px;border-radius:2px;background:linear-gradient(135deg,#F0A088,#E06040 50%,#C84020);border:1px solid #fff"><svg class="a" style="left:2px;top:2px" width="9" height="9"><path d="M1 1L8 8M8 1L1 8" stroke="#fff" stroke-width="1.6"/></svg></div>
<div class="a" style="left:147px;top:95px;width:245.5px;height:328.3px;background:#F4F3E8"></div>
<!-- step/frame group -->
<div class="a" style="left:150px;top:103px;width:239px;height:45px;border:1px solid #DEDBCC;border-radius:3px"></div>
<div class="a" style="left:155px;top:100px;width:43px;height:6px;background:#F4F3E8"></div>
<div class="t" style="left:157px;top:100.7px;color:#0046D5">Step/Frame</div>
<div class="t" style="left:155px;top:115.4px">Step: 1, Apply load</div>
<div class="t" style="left:155px;top:130.2px">Frame:&nbsp; 1</div>
<div class="a" style="left:194px;top:128.5px;width:52.5px;height:13px;border:1px solid #6080B0;border-radius:2px;background:linear-gradient(#FFFFFF,#F0F0EA 70%,#D8D6CC)"></div>
<div class="a" style="left:195px;top:129.5px;width:50.5px;height:11px;border:1px solid #C4D6F4;border-radius:1px"></div>
<div class="t" style="left:196px;top:131.7px">Step/Frame...</div>
<!-- tabs -->
<div class="a" style="left:189px;top:153.5px;width:31px;height:13px;background:linear-gradient(#FAFAF6,#E8E6DC);border:1px solid #9CA8B8;border-bottom:none;border-radius:2px 2px 0 0"></div>
<div class="t" style="left:194.6px;top:156.5px">Setup</div>
<div class="a" style="left:150px;top:166px;width:239px;height:232px;background:#FCFCFE;border:1px solid #9CA8B8"></div>
<div class="a" style="left:150px;top:151px;width:40px;height:16px;background:#FCFCFE;border:1px solid #9CA8B8;border-bottom:none;border-radius:2px 2px 0 0"></div>
<div class="a" style="left:150px;top:151px;width:40px;height:2px;background:#F0A830;border-radius:2px 2px 0 0"></div>
<div class="t" style="left:155.4px;top:155.9px">Variable</div>
<!-- output variables group -->
<div class="a" style="left:154px;top:175.5px;width:232px;height:219px;border:1px solid #DAD8CC;border-radius:3px"></div>
<div class="a" style="left:159px;top:172px;width:61px;height:7px;background:#FCFCFE"></div>
<div class="t" style="left:162px;top:172.7px;color:#0046D5">Output Variables</div>
<div class="t" style="left:159px;top:189px">Position:</div>
<div class="a" style="left:191px;top:185.5px;width:93px;height:15px;background:#fff;border:1px solid #7F9DB9"></div>
<div class="t" style="left:194px;top:189px">Unique Nodal</div>
<div class="a" style="left:273px;top:186.5px;width:10px;height:13px;border-radius:1px;background:linear-gradient(#C8D8FC,#A8C0F4);border:1px solid #B8CCF4"><svg class="a" style="left:1px;top:3.5px" width="8" height="6"><path d="M1 1 L4 4 L7 1" fill="none" stroke="#4D6185" stroke-width="1.5"/></svg></div>
<div class="t" style="left:159px;top:205.7px">Click checkboxes or edit the identifiers shown next to Edit below.</div>
<!-- list -->
<div class="a" style="left:158px;top:218px;width:224px;height:137px;background:#fff;border:1px solid #7F9DB9;overflow:hidden">
 <div class="a" style="left:34px;top:-7px;width:10px;height:10px;border:1px solid #1C5180;background:linear-gradient(135deg,#DCDCD7,#fff)"></div>
</div>
<div class="a" style="left:193px;top:224.3px;width:9.5px;height:9.5px;border:1px solid #6F8FB5;background:linear-gradient(135deg,#DCDCD4,#F8F8F6 80%,#fff)"></div>
<div class="t" style="left:204.8px;top:225px">Min. In-Plane Principal</div>
<div class="a" style="left:193px;top:236.3px;width:9.5px;height:9.5px;border:1px solid #6F8FB5;background:linear-gradient(135deg,#DCDCD4,#F8F8F6 80%,#fff)"></div>
<div class="t" style="left:204.8px;top:237px">Max. Principal</div>
<div class="a" style="left:193px;top:248.4px;width:9.5px;height:9.5px;border:1px solid #6F8FB5;background:linear-gradient(135deg,#DCDCD4,#F8F8F6 80%,#fff)"></div>
<div class="t" style="left:204.8px;top:249.1px">Min. Principal</div>
<div class="a" style="left:193px;top:260.4px;width:9.5px;height:9.5px;border:1px solid #6F8FB5;background:linear-gradient(135deg,#DCDCD4,#F8F8F6 80%,#fff)"></div>
<div class="t" style="left:204.8px;top:261.1px">E11</div>
<svg class="a" style="left:164px;top:276.7px" width="9" height="6"><path d="M0 0 H8.5 L4.25 5.5Z" fill="#000"/></svg>
<div class="a" style="left:178.3px;top:275.2px;width:9.5px;height:9.5px;border:1px solid #6F8FB5;background:linear-gradient(135deg,#DCDCD4,#F8F8F6 80%,#fff)"></div>
<div class="a" style="left:180.60000000000002px;top:277.5px;width:5px;height:5px;background:#4CC050"></div>
<div class="t" style="left:190.0px;top:276.2px">RF: Reaction force</div>
<div class="a" style="left:193px;top:287.5px;width:9.5px;height:9.5px;border:1px solid #6F8FB5;background:linear-gradient(135deg,#DCDCD4,#F8F8F6 80%,#fff)"></div>
<div class="t" style="left:204.8px;top:288.2px">Magnitude</div>
<div class="a" style="left:193px;top:299.4px;width:9.5px;height:9.5px;border:1px solid #6F8FB5;background:linear-gradient(135deg,#DCDCD4,#F8F8F6 80%,#fff)"></div>
<svg class="a" style="left:194.5px;top:300.9px" width="7" height="7"><path d="M0.8 3.2 L2.8 5.4 L6.2 1.2" fill="none" stroke="#21A121" stroke-width="1.5"/></svg>
<div class="t" style="left:204.8px;top:300.1px">RF1</div>
<div class="a" style="left:193px;top:311px;width:9.5px;height:9.5px;border:1px solid #6F8FB5;background:linear-gradient(135deg,#DCDCD4,#F8F8F6 80%,#fff)"></div>
<svg class="a" style="left:194.5px;top:312.5px" width="7" height="7"><path d="M0.8 3.2 L2.8 5.4 L6.2 1.2" fill="none" stroke="#21A121" stroke-width="1.5"/></svg>
<div class="t" style="left:204.8px;top:311.7px">RF2</div>
<div class="a" style="left:204.3px;top:310.8px;width:15px;height:10px;border:1px dotted #666"></div>
<svg class="a" style="left:165.5px;top:326.9px" width="6" height="9"><path d="M0 0 V8.5 L5 4.25Z" fill="#000"/></svg>
<div class="a" style="left:178.3px;top:326.7px;width:9.5px;height:9.5px;border:1px solid #6F8FB5;background:linear-gradient(135deg,#DCDCD4,#F8F8F6 80%,#fff)"></div>
<div class="t" style="left:190.0px;top:327.4px">S: Stress components</div>
<svg class="a" style="left:165.5px;top:341.9px" width="6" height="9"><path d="M0 0 V8.5 L5 4.25Z" fill="#000"/></svg>
<div class="a" style="left:178.3px;top:341.7px;width:9.5px;height:9.5px;border:1px solid #6F8FB5;background:linear-gradient(135deg,#DCDCD4,#F8F8F6 80%,#fff)"></div>
<div class="t" style="left:190.0px;top:342.4px">U: Spatial displacement</div>
<!-- list scrollbar -->
<div class="a" style="left:369px;top:219px;width:12px;height:135px;background:#F4F4F0"></div>
<div class="a" style="left:369.5px;top:220.3px;width:10.5px;height:11.5px;border-radius:2px;background:linear-gradient(90deg,#C8D8FC,#B4C8F8);border:1px solid #C8D6F8"><svg class="a" style="left:1px;top:2.5px" width="8" height="6"><path d="M1 4.5 L4 1.5 L7 4.5" fill="none" stroke="#4D6185" stroke-width="1.5"/></svg></div>
<div class="a" style="left:369.5px;top:258px;width:10.5px;height:84px;border-radius:2px;background:linear-gradient(90deg,#C4D4FC,#B4C8F8);border:1px solid #C0D0F8"><svg class="a" style="left:2.5px;top:38px" width="5" height="6"><path d="M0 0.5H5M0 2.5H5M0 4.5H5" stroke="#EEF2FE" stroke-width="0.8"/></svg></div>
<div class="a" style="left:369.5px;top:342.5px;width:10.5px;height:11px;border-radius:2px;background:linear-gradient(90deg,#C8D8FC,#B4C8F8);border:1px solid #C8D6F8"><svg class="a" style="left:1px;top:2.5px" width="8" height="6"><path d="M1 1.5 L4 4.5 L7 1.5" fill="none" stroke="#4D6185" stroke-width="1.5"/></svg></div>
<!-- edit -->
<div class="t" style="left:158.8px;top:362.8px">Edit:</div>
<div class="a" style="left:177.5px;top:359.3px;width:204px;height:14.5px;background:#fff;border:1px solid #7F9DB9"></div>
<div class="t" style="left:179.6px;top:362.8px">RF.RF1,RF.RF2</div>
<div class="t" style="left:158.8px;top:381.1px">Section point:</div>
<div class="a" style="left:211.8px;top:379.5px;width:9.5px;height:9.5px;border-radius:50%;border:1px solid #CAC8BC;background:#F6F5F0"></div>
<div class="t" style="left:223.6px;top:381.1px;color:#ACA899">All</div>
<div class="a" style="left:237.3px;top:379.5px;width:9.5px;height:9.5px;border-radius:50%;border:1px solid #CAC8BC;background:#F6F5F0"></div>
<div class="t" style="left:249px;top:381.1px;color:#ACA899">Select</div>
<div class="a" style="left:275.4px;top:377.7px;width:40px;height:12.5px;border:1px solid #CAC8BC;border-radius:2px;background:#F4F3EE"></div>
<div class="t" style="left:277.5px;top:381.1px;color:#ACA899">Settings...</div>
<!-- buttons -->
<div class="a" style="left:157px;top:406.8px;width:41.2px;height:13px;border:1px solid #4A6A9C;border-radius:2px;background:linear-gradient(#FFFFFF,#F4F4EE 60%,#E0DED4)"></div>
<div class="t" style="left:173px;top:409.6px">OK</div>
<div class="a" style="left:218.2px;top:406.8px;width:41.2px;height:13px;border:1px solid #4A6A9C;border-radius:2px;background:linear-gradient(#FFFFFF,#F4F4EE 60%,#E0DED4)"></div>
<div class="t" style="left:228.9px;top:409.6px">Apply</div>
<div class="a" style="left:279.3px;top:406.8px;width:41.2px;height:13px;border:1px solid #4A6A9C;border-radius:2px;background:linear-gradient(#FFFFFF,#F4F4EE 60%,#E0DED4)"></div>
<div class="t" style="left:285.7px;top:409.6px">Defaults</div>
<div class="a" style="left:340.5px;top:406.8px;width:41.2px;height:13px;border:1px solid #4A6A9C;border-radius:2px;background:linear-gradient(#FFFFFF,#F4F4EE 60%,#E0DED4)"></div>
<div class="t" style="left:349.5px;top:409.6px">Cancel</div>
</body></html>
